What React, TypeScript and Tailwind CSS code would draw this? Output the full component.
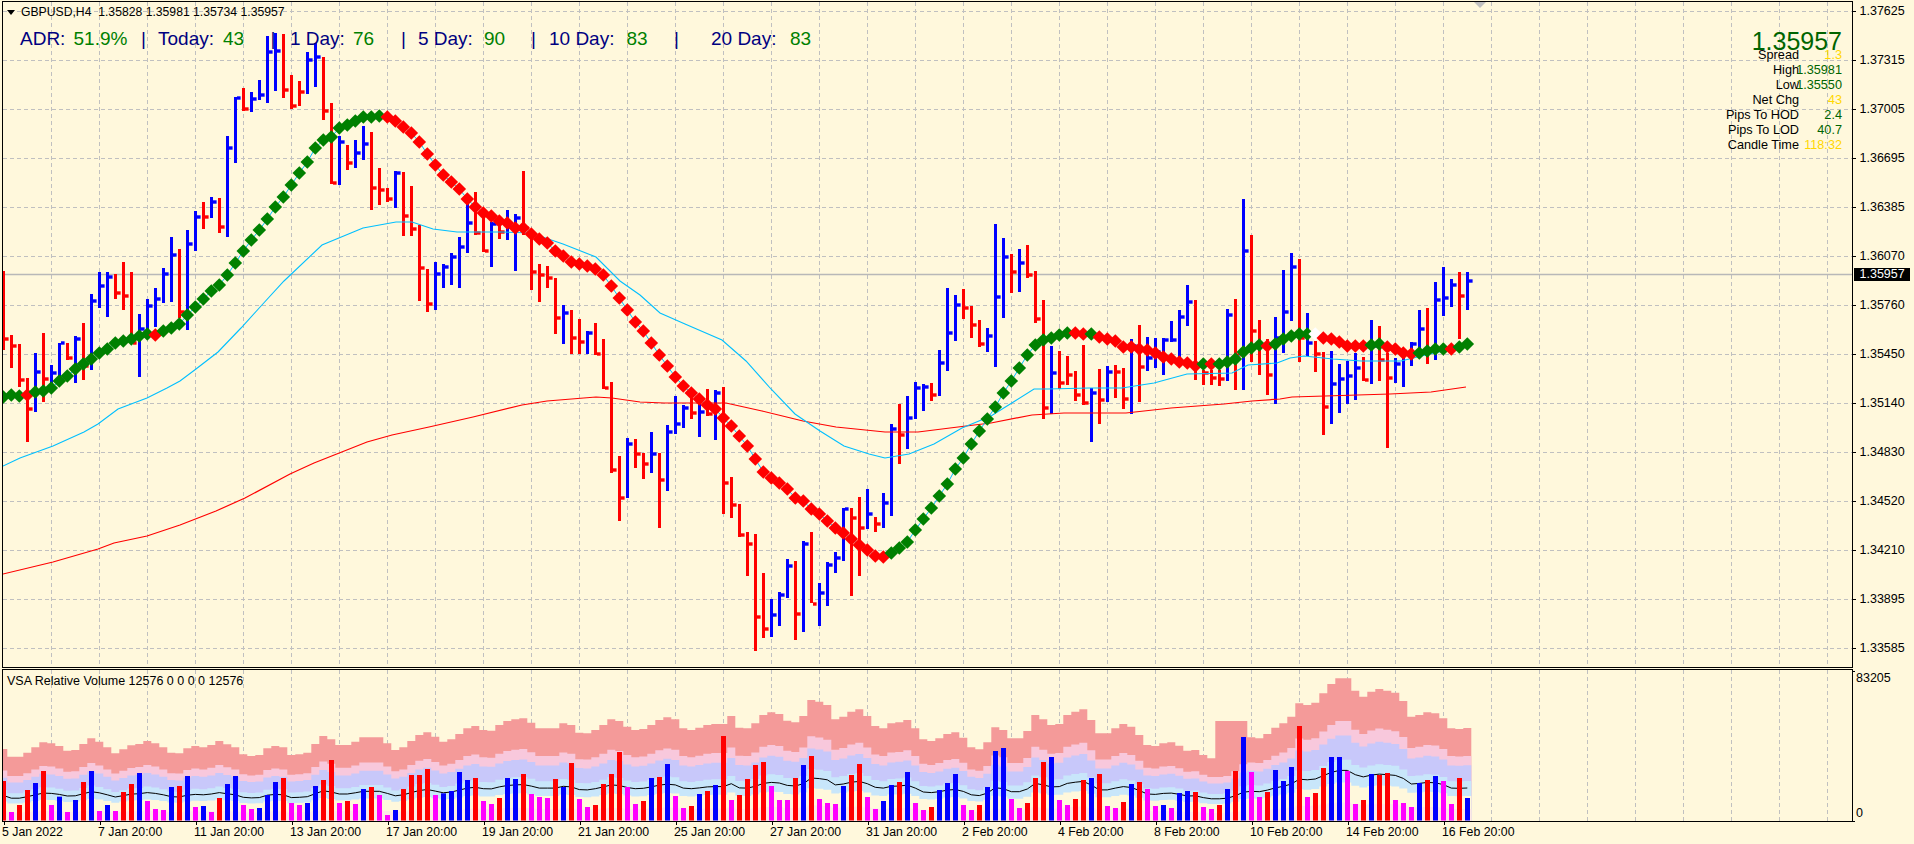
const R = "#ff0000";
const B = "#0000ff";

// [high y, low y, close tick y, colour]
const barData =
  "271,350,339,r 335,368,346,r 344,387,380,r 378,442,409,r 353,412,372,b 333,402,379,r 365,390,373,b 343,381,343,b 343,360,358,r 336,383,339,b 323,380,366,r 294,370,301,b 272,308,286,b 272,317,277,b 274,299,293,r 262,310,296,r 272,344,343,r 314,377,329,b 299,331,306,b 288,327,299,b 268,303,274,b 237,302,255,b 249,318,312,r 230,330,244,b 211,251,217,b 202,229,217,r 197,218,202,b 198,233,227,r 136,237,148,b 97,163,98,b 88,111,109,r 92,112,99,b 80,100,95,b 36,103,52,b 33,91,51,b 34,98,90,r 75,109,106,r 81,106,92,r 52,94,60,b 43,87,57,b 57,120,111,r 103,184,183,r 136,185,142,b 145,170,163,r 140,168,153,b 126,160,144,b 132,210,188,r 168,205,190,r 188,202,199,r 171,208,173,b 172,236,216,r 186,236,229,r 225,301,268,r 269,312,304,r 262,310,274,b 264,288,267,b 253,285,257,b 237,288,247,b 204,253,223,b 192,235,233,r 210,252,251,r 222,267,224,b 217,239,232,r 210,240,227,b 214,271,218,b 171,235,228,r 230,290,272,r 264,302,275,r 266,288,278,r 278,334,318,r 305,344,313,b 310,354,338,r 319,354,342,r 331,354,333,b 323,355,354,r 339,389,388,r 382,473,470,r 456,521,498,r 438,498,444,b 439,468,454,r " +
  "453,479,464,r 432,473,454,b 453,528,480,r 425,491,432,b 396,434,424,b 405,428,408,b 398,419,413,r 404,437,412,b 389,416,414,r 390,440,393,b 387,514,483,r 477,518,505,r 504,537,535,r 532,576,544,r 534,651,617,r 573,638,629,r 599,637,615,b 592,626,595,b 559,598,566,b 561,640,614,r 541,632,544,b 532,603,604,r 583,626,593,b 562,606,565,b 552,573,558,b 508,561,509,b 508,596,518,r 497,576,528,r 489,529,514,b 517,532,524,r 493,528,503,b 424,516,429,b 404,464,435,r 396,449,418,b 382,419,388,b 384,411,387,b 383,401,395,r 350,396,363,b 288,371,333,b 295,341,305,b 289,319,308,r 306,338,325,r 320,347,344,r 328,352,336,b 224,367,297,b 238,318,257,b 254,293,272,r 249,292,263,b 245,278,275,r 271,323,319,r 300,419,408,r 346,414,373,b 351,389,383,r 356,385,375,r 371,401,395,r 345,405,403,r 388,442,393,b 369,424,400,r 366,402,372,b 365,398,372,r 368,409,399,r 339,414,346,b 325,402,367,r 337,371,358,b 338,368,352,b 338,375,340,b 321,342,340,b 310,360,317,b 285,326,302,b 300,380,365,r 370,385,373,r 370,385,378,r 370,386,379,r 309,381,315,b 299,390,355,r 199,390,251,b 235,362,331,r 320,375,345,r 339,395,375,r 317,404,338,b " +
  "270,353,312,b 253,321,267,b 259,362,338,r 313,356,343,b 341,372,354,r 352,435,407,r 351,424,384,b 364,413,379,b 361,404,376,b 353,400,368,b 357,381,380,r 320,384,346,b 326,381,360,r 353,448,378,r 358,383,364,b 351,387,354,b 342,366,344,b 310,353,329,b 308,364,349,r 282,360,300,b 267,316,298,b 279,307,285,b 272,339,296,r 272,310,281,b";

const bars = barData
  .trim()
  .split(/\s+/)
  .map((s, i) => {
    const [t, b, c, col] = s.split(",");
    return { i, t: +t, b: +b, c: +c, col: col === "r" ? R : B };
  });

const diamondY = [
  397, 395, 396, 395, 392, 391, 388, 381, 376, 369, 364, 359, 353, 349, 343, 341, 339, 336, 334, 335, 331, 328, 324, 315, 307, 299, 291, 285, 275, 263, 251, 240, 230, 219, 207, 197, 185, 173, 162, 148, 140, 137, 128, 125, 121, 117, 117, 116, 117, 121, 127, 133, 142, 154, 165, 175, 182, 189, 199, 207, 213, 216, 221, 223, 228, 228, 234, 239, 243, 251, 256, 262, 264, 266, 269, 275, 286, 298, 310, 322,
  331, 343, 355, 366, 377, 386, 393, 399, 405, 409, 418, 426, 436, 446, 459, 472, 478, 483, 489, 498, 501, 509, 514, 521, 528, 533, 539, 545, 550, 556, 557, 553, 548, 542, 530, 519, 508, 496, 484, 469, 458, 444, 431, 419, 407, 393, 381, 368, 355, 345, 340, 338, 335, 333, 333, 334, 334, 337, 339, 341, 347, 347, 349, 350, 353, 357, 359, 362, 363, 366, 364, 364, 364, 362, 359, 352, 348, 345, 346, 344,
  339, 336, 334, 334, 334, 338, 339, 342, 346, 346, 346, 345, 344, 347, 349, 353, 354, 353, 351, 349, 349, 349, 347, 344,
];

const isRedDiamond = (i: number) =>
  i === 3 || i === 19 || (i >= 48 && i <= 110) || i === 134 || i === 135 || (i >= 137 && i <= 149) || i === 151 || i === 158 || (i >= 165 && i <= 170) || (i >= 173 && i <= 176) || i === 181;

const blueMa =
  "3,466 20,458 53,446 84,432 98,424 118,409 147,398 167,388 180,381 196,369 218,352 241,328 261,306 284,281 322,245 363,228 396,222 412,222 433,229 457,232 502,232 531,233 563,244 596,257 620,281 640,295 660,313 685,324 722,340 746,361 771,389 795,414 820,431 844,446 869,454 885,458 909,454 934,444 962,428 991,416 1015,401 1034,389 1048,389 1089,388 1122,388 1154,383 1187,374 1232,373 1248,365 1277,363 1290,358 1304,356 1333,359 1361,361 1401,361 1434,353 1466,347";
const redMa =
  "3,574 53,562 98,549 114,543 147,536 180,525 216,511 245,498 290,474 314,463 367,442 392,435 429,427 473,417 522,405 547,401 596,397 612,398 640,402 664,403 726,403 762,411 803,421 836,427 885,432 918,432 966,426 991,423 1032,415 1064,413 1126,413 1171,408 1224,404 1252,401 1280,399 1292,397 1325,396 1390,394 1431,392 1466,387";

// salmon band top, as rows in the 660-based scale x3
const salmon = [
  267, 290, 290, 278, 262, 247, 250, 258, 272, 270, 252, 235, 245, 262, 280, 268, 256, 252, 243, 250, 262, 278, 280, 265, 258, 262, 255, 243, 253, 262, 283, 288, 285, 265, 258, 262, 285, 283, 278, 252, 228, 238, 255, 255, 245, 232, 232, 232, 250, 270, 262, 243, 225, 217, 230, 245, 238, 222, 205, 198, 210, 212, 195, 183, 178, 175, 188, 205, 205, 205, 190, 195, 218, 220, 210, 195, 178, 183, 200, 210,
  207, 195, 180, 172, 178, 205, 210, 203, 195, 192, 192, 168, 203, 205, 190, 165, 157, 162, 182, 187, 168, 120, 125, 135, 178, 170, 155, 148, 168, 198, 205, 190, 187, 180, 205, 238, 243, 235, 222, 217, 233, 262, 268, 247, 202, 210, 235, 235, 213, 165, 178, 195, 192, 165, 155, 148, 180, 220, 220, 205, 192, 200, 225, 255, 258, 250, 247, 257, 272, 270, 285, 295, 183, 183, 183, 183, 232, 235, 222, 203,
  190, 170, 130, 135, 128, 100, 72, 55, 55, 92, 110, 95, 87, 92, 98, 123, 170, 165, 157, 160, 175, 205, 207, 204,
];
const bandBasis: Record<number, number> = { 152: 295, 153: 290, 154: 270, 155: 240 };

const volData =
  "r363 m456 r435 r390 b369 r333 m435 b410 m456 b420 r366 b333 m453 b435 m453 r396 r372 b339 m423 m447 m450 b381 r378 b348 m441 b438 m456 r414 b372 b348 m435 m447 b444 b405 b366 r354 m429 m435 b429 b378 r360 r300 m429 r423 m432 b387 r381 m405 m465 b450 r387 r345 r345 r327 m405 b400 b393 b336 b360 r354 m423 m432 r414 b354 b357 r342 m402 m411 m414 r357 b381 r309 m417 m441 r435 r372 r342 r276 m381 m432 " +
  "r423 b354 r351 b312 m408 m444 r438 b402 r393 b375 r228 m420 r405 r357 r315 r306 m378 m420 m420 r354 b315 r288 m417 m429 m432 b378 r345 r312 m411 m447 b423 b375 r366 b336 m429 m450 r441 b390 b369 b342 m435 m450 r435 b381 b273 b264 m417 m444 r429 r354 r306 b291 m420 m435 r417 r360 b354 r342 m438 m444 r426 b372 r366 m387 m438 b435 m444 b399 b393 r396 m441 m447 r435 b387 r333 b231 m336 m411 r396 b330 " +
  "b363 b321 r198 m411 r399 r324 b291 b291 m333 m432 r420 b342 r345 r339 m420 m429 m441 b369 r360 b348 m363 m432 r354 b414";

const vols = volData
  .trim()
  .split(/\s+/)
  .map((s, i) => ({
    i,
    y: 660 + +s.slice(1) / 3,
    col: s[0] === "r" ? R : s[0] === "b" ? B : "#ff00ff",
  }));

const BASE = 821;
const heightOf = (i: number) => BASE - (660 + (bandBasis[i] ?? salmon[i]) / 3);
const steps = (f: (i: number) => number) => {
  let d = `M3 ${BASE}`;
  for (let i = 0; i < 184; i++) {
    const x = 3.3 + 8 * i;
    const y = f(i).toFixed(1);
    d += ` L${Math.max(3, x - 4)} ${y} L${x + 4} ${y}`;
  }
  return `${d} L${3.3 + 8 * 183 + 4} ${BASE} Z`;
};

const salmonPath = steps((i) => 660 + salmon[i] / 3);
const pinkPath = steps((i) => BASE - heightOf(i) * 0.7);
const lavPath = steps((i) => BASE - heightOf(i) * 0.6);
const skyPath = steps((i) => BASE - heightOf(i) * 0.43);
const creamPath = steps((i) => BASE - heightOf(i) * 0.27);
const faintPath = steps((i) => BASE - heightOf(i) * 0.13);
const blackLine = salmon.map((_, i) => `${3.3 + 8 * i},${(BASE - heightOf(i) * 0.355).toFixed(1)}`).join(" ");

const gridX = Array.from({ length: 38 }, (_, k) => 51.5 + 48 * k);
const gridY = Array.from({ length: 14 }, (_, k) => 11.5 + 49 * k);

const prices = ["1.37625", "1.37315", "1.37005", "1.36695", "1.36385", "1.36070", "1.35760", "1.35450", "1.35140", "1.34830", "1.34520", "1.34210", "1.33895", "1.33585"];
const dates = ["5 Jan 2022", "7 Jan 20:00", "11 Jan 20:00", "13 Jan 20:00", "17 Jan 20:00", "19 Jan 20:00", "21 Jan 20:00", "25 Jan 20:00", "27 Jan 20:00", "31 Jan 20:00", "2 Feb 20:00", "4 Feb 20:00", "8 Feb 20:00", "10 Feb 20:00", "14 Feb 20:00", "16 Feb 20:00"];

const adr = [
  { t: "ADR:", c: "w-[53.5px] text-[#000080]" },
  { t: "51.9%", c: "w-[67.5px] text-[#008000]" },
  { t: "|", c: "w-[17px] text-[#000080]" },
  { t: "Today:", c: "w-[65px] text-[#000080]" },
  { t: "43", c: "w-[47.6px] text-[#008000]" },
  { t: "|", c: "w-[19.4px] text-[#000080]" },
  { t: "1 Day:", c: "w-[63px] text-[#000080]" },
  { t: "76", c: "w-[48px] text-[#008000]" },
  { t: "|", c: "w-[17px] text-[#000080]" },
  { t: "5 Day:", c: "w-[66px] text-[#000080]" },
  { t: "90", c: "w-[47px] text-[#008000]" },
  { t: "|", c: "w-[18px] text-[#000080]" },
  { t: "10 Day:", c: "w-[77.5px] text-[#000080]" },
  { t: "83", c: "w-[47.5px] text-[#008000]" },
  { t: "|", c: "w-[37px] text-[#000080]" },
  { t: "20 Day:", c: "w-[79px] text-[#000080]" },
  { t: "83", c: "w-[30px] text-[#008000]" },
];

const stats = [
  { l: "Spread", v: "1.3", c: "text-[#ffd700]" },
  { l: "High", v: "1.35981", c: "text-[#006400]" },
  { l: "Low", v: "1.35550", c: "text-[#006400]" },
  { l: "Net Chg", v: "43", c: "text-[#ffd700]" },
  { l: "Pips To HOD", v: "2.4", c: "text-[#006400]" },
  { l: "Pips To LOD", v: "40.7", c: "text-[#006400]" },
  { l: "Candle Time", v: "118:32", c: "text-[#ffd700]" },
];

function MainPlot() {
  return (
    <svg className="absolute inset-0" width="1849" height="665" viewBox="3 2 1849 665">
      {gridX.map((x) => (
        <line key={x} x1={x} x2={x} y1="2" y2="667" stroke="#c0c0c0" strokeDasharray="4 3" />
      ))}
      {gridY.map((y) => (
        <line key={y} x1="3" x2="1852" y1={y} y2={y} stroke="#c0c0c0" strokeDasharray="4 3" />
      ))}
      <line x1="3" x2="1852" y1="274.5" y2="274.5" stroke="#b8b8b8" strokeWidth="1.4" />
      <polygon points="1474,2 1486,2 1480,8" fill="#c0c0c0" />
      {bars.map((b) => (
        <g key={b.i} fill={b.col}>
          <rect x={2 + 8 * b.i} y={b.t} width="3" height={b.b - b.t} />
          <rect x={5 + 8 * b.i} y={b.c - 1.7} width="3.6" height="3.4" />
        </g>
      ))}
      <polyline points={redMa} fill="none" stroke={R} strokeWidth="1.2" />
      <polyline points={blueMa} fill="none" stroke="#00bfff" strokeWidth="1.1" />
      <polyline points={diamondY.map((y, i) => `${3.3 + 8 * i},${y}`).join(" ")} fill="none" stroke="#00bfff" strokeWidth="1" />
      {diamondY.map((y, i) => {
        const x = 3.3 + 8 * i;
        const fill = i === 164 ? "#ffffff" : isRedDiamond(i) ? R : "#008000";
        const h = 6.8;
        return <polygon key={i} points={`${x - h},${y} ${x},${y - h} ${x + h},${y} ${x},${y + h}`} fill={fill} />;
      })}
    </svg>
  );
}

function VolumePlot() {
  return (
    <svg className="absolute inset-0" width="1849" height="151" viewBox="3 670 1849 151">
      {gridX.map((x) => (
        <line key={x} x1={x} x2={x} y1="670" y2="821" stroke="#c0c0c0" strokeDasharray="4 3" />
      ))}
      <path d={salmonPath} fill="#f49a99" />
      <path d={pinkPath} fill="#f8c8dc" />
      <path d={lavPath} fill="#c8c8fa" />
      <path d={skyPath} fill="#c8e6fa" />
      <path d={creamPath} fill="#fff8dc" />
      <path d={faintPath} fill="#fde8e6" />
      <polyline points={blackLine} fill="none" stroke="#000000" strokeWidth="1" />
      {vols.map((v) => (
        <rect key={v.i} x={1 + 8 * v.i} y={v.y} width="5" height={820.5 - v.y} fill={v.col} />
      ))}
    </svg>
  );
}

export default function App() {
  return (
    <div className="w-[1914px] h-[844px] overflow-hidden bg-[#fff8dc] pt-px pl-[2px] flex flex-col text-black font-['Liberation_Sans',Arial,sans-serif]">
      <div className="flex h-[667px] shrink-0">
        <div className="relative w-[1851px] h-full border border-black overflow-hidden">
          <MainPlot />
          <div className="absolute left-[4px] top-[2.5px] flex items-center gap-[6px] text-[12.2px] leading-[15px]">
            <span className="w-0 h-0 border-x-[4.5px] border-x-transparent border-t-[5px] border-t-black" />
            <span className="whitespace-pre">GBPUSD,H4  1.35828 1.35981 1.35734 1.35957</span>
          </div>
          <div className="absolute left-[17px] top-[25px] flex text-[19px] leading-[24px] whitespace-nowrap">
            {adr.map((a, i) => (
              <span key={i} className={a.c}>
                {a.t}
              </span>
            ))}
          </div>
          <div className="absolute right-[10px] top-[24.7px] flex flex-col items-end">
            <div className="h-[21.5px] text-[25px] leading-[28px] text-[#006400]">1.35957</div>
            {stats.map((s) => (
              <div key={s.l} className="flex h-[15px] text-[12.7px] leading-[15px] whitespace-nowrap">
                <span>{s.l}</span>
                <span className={`flex justify-end w-[43px] ${s.c}`}>{s.v}</span>
              </div>
            ))}
          </div>
        </div>
        <div className="relative flex-1 overflow-hidden">
          <div className="-mt-[14px] flex flex-col">
            {prices.map((p) => (
              <div key={p} className="flex items-center h-[49px] text-[12.5px]">
                <span className="w-[3px] h-px bg-black" />
                <span className="ml-[3.5px]">{p}</span>
              </div>
            ))}
          </div>
          <div className="absolute left-[1px] top-[267px] w-[56px] h-[13px] bg-black text-white text-[12.5px] leading-[13px] pl-[5.5px]">1.35957</div>
        </div>
      </div>
      <div className="flex h-[153px] shrink-0 mt-px">
        <div className="relative w-[1851px] h-full border border-black overflow-hidden">
          <VolumePlot />
          <div className="absolute left-[4px] top-[3.5px] text-[12.5px] leading-[15px] whitespace-pre">VSA Relative Volume 12576 0 0 0 0 12576</div>
        </div>
        <div className="relative flex-1 flex flex-col justify-between pl-[3px] pt-[2px] pb-[1px] text-[12.5px] leading-[15px]">
          <span className="absolute left-0 top-[2px] w-[2px] h-px bg-black" />
          <span>83205</span>
          <span>0</span>
          <span className="absolute left-0 bottom-0 w-[2px] h-px bg-black" />
        </div>
      </div>
      <div className="flex flex-1 pl-[1.5px]">
        {dates.map((d) => (
          <div key={d} className="flex flex-col w-[96px] shrink-0">
            <span className="w-px h-[3px] bg-black" />
            <span className="-ml-[1.5px] text-[12.3px] leading-[15px] whitespace-nowrap">{d}</span>
          </div>
        ))}
      </div>
    </div>
  );
}
